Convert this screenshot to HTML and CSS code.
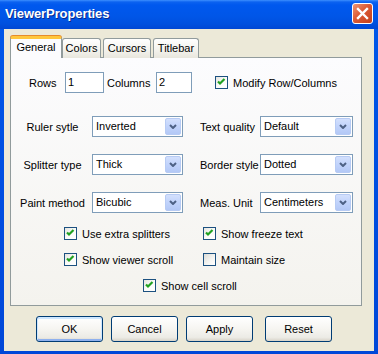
FILE: index.html
```html
<!DOCTYPE html>
<html lang="en">
<head>
    <meta charset="UTF-8">
    <title>ViewerProperties</title>
    <link rel="stylesheet" href="styles.css">
</head>
<body>
    <div class="window">
        <div class="titlebar">
            <span class="title">ViewerProperties</span>
            <div class="close">
                <svg width="19" height="19" viewBox="0 0 19 19"><path d="M5 5 L14 14 M14 5 L5 14" stroke="#fff" stroke-width="2.4" stroke-linecap="square"/></svg>
            </div>
        </div>
        <div class="client">
            <div class="tabs">
                <div class="tab active">General</div>
                <div class="tab colors">Colors</div>
                <div class="tab cursors">Cursors</div>
                <div class="tab titlebar-tab">Titlebar</div>
            </div>
            <div class="panel">
                <div class="row-top">
                    <span class="lbl-rows">Rows</span>
                    <div class="input w-rows">1</div>
                    <span class="lbl-cols">Columns</span>
                    <div class="input w-cols">2</div>
                    <div class="check-item modify">
                        <span class="box checked"><svg width="11" height="11" viewBox="0 0 11 11"><polyline points="2,4.5 4,6.5 8.5,2" fill="none" stroke="#21a121" stroke-width="2.2"/></svg></span>
                        <span>Modify Row/Columns</span>
                    </div>
                </div>

                <div class="form-grid">
                    <span class="lbl-left">Ruler sytle</span>
                    <div class="select"><span class="value">Inverted</span><span class="arrow"><svg width="8" height="5" viewBox="0 0 8 5"><polyline points="1,1 4,4 7,1" fill="none" stroke="#4d6185" stroke-width="2"/></svg></span></div>
                    <span></span>
                    <span class="lbl-right">Text quality</span>
                    <div class="select"><span class="value">Default</span><span class="arrow"><svg width="8" height="5" viewBox="0 0 8 5"><polyline points="1,1 4,4 7,1" fill="none" stroke="#4d6185" stroke-width="2"/></svg></span></div>

                    <span class="lbl-left">Splitter type</span>
                    <div class="select"><span class="value">Thick</span><span class="arrow"><svg width="8" height="5" viewBox="0 0 8 5"><polyline points="1,1 4,4 7,1" fill="none" stroke="#4d6185" stroke-width="2"/></svg></span></div>
                    <span></span>
                    <span class="lbl-right">Border style</span>
                    <div class="select"><span class="value">Dotted</span><span class="arrow"><svg width="8" height="5" viewBox="0 0 8 5"><polyline points="1,1 4,4 7,1" fill="none" stroke="#4d6185" stroke-width="2"/></svg></span></div>

                    <span class="lbl-left">Paint method</span>
                    <div class="select"><span class="value">Bicubic</span><span class="arrow"><svg width="8" height="5" viewBox="0 0 8 5"><polyline points="1,1 4,4 7,1" fill="none" stroke="#4d6185" stroke-width="2"/></svg></span></div>
                    <span></span>
                    <span class="lbl-right">Meas. Unit</span>
                    <div class="select"><span class="value">Centimeters</span><span class="arrow"><svg width="8" height="5" viewBox="0 0 8 5"><polyline points="1,1 4,4 7,1" fill="none" stroke="#4d6185" stroke-width="2"/></svg></span></div>
                </div>

                <div class="checks">
                    <div class="check-item">
                        <span class="box checked"><svg width="11" height="11" viewBox="0 0 11 11"><polyline points="2,4.5 4,6.5 8.5,2" fill="none" stroke="#21a121" stroke-width="2.2"/></svg></span>
                        <span>Use extra splitters</span>
                    </div>
                    <div class="check-item">
                        <span class="box checked"><svg width="11" height="11" viewBox="0 0 11 11"><polyline points="2,4.5 4,6.5 8.5,2" fill="none" stroke="#21a121" stroke-width="2.2"/></svg></span>
                        <span>Show freeze text</span>
                    </div>
                    <div class="check-item">
                        <span class="box checked"><svg width="11" height="11" viewBox="0 0 11 11"><polyline points="2,4.5 4,6.5 8.5,2" fill="none" stroke="#21a121" stroke-width="2.2"/></svg></span>
                        <span>Show viewer scroll</span>
                    </div>
                    <div class="check-item">
                        <span class="box"></span>
                        <span>Maintain size</span>
                    </div>
                    <div class="check-item wide">
                        <span class="box checked"><svg width="11" height="11" viewBox="0 0 11 11"><polyline points="2,4.5 4,6.5 8.5,2" fill="none" stroke="#21a121" stroke-width="2.2"/></svg></span>
                        <span>Show cell scroll</span>
                    </div>
                </div>
            </div>
            <div class="buttons">
                <div class="btn default">OK</div>
                <div class="btn">Cancel</div>
                <div class="btn">Apply</div>
                <div class="btn reset">Reset</div>
            </div>
        </div>
    </div>
</body>
</html>
```

FILE: styles.css
```css
:root{
    --xp-blue: #0054e3;
    --face: #ece9d8;
    --tab-border: #919b9c;
    --field-border: #7f9db9;
    --check-border: #1c5180;
}
*,*::before,*::after{
    box-sizing: border-box;
}
body{
    margin: 0;
    font-family: "Liberation Sans", Arial, sans-serif;
    font-size: 11px;
    color: #000;
}
.window{
    width: 378px;
    height: 354px;
    display: flex;
    flex-direction: column;
    background: linear-gradient(#0058ea, #0047d8);
}
.titlebar{
    height: 29px;
    flex: none;
    display: flex;
    justify-content: space-between;
    align-items: flex-start;
    padding: 3px 5px 0 5px;
    background: linear-gradient(#3d8ffe 0, #0c62f0 2px, #0058ee 5px, #0056e8 16px, #0050de 24px, #0047d4 29px);
}
.title{
    color: #fff;
    font-weight: bold;
    font-size: 13px;
    letter-spacing: -0.1px;
    line-height: 22px;
    text-shadow: 1px 1px #0b2a8c;
}
.close{
    width: 21px;
    height: 21px;
    border: 1px solid #fff;
    border-radius: 3px;
    background: linear-gradient(135deg, #ee9675 0, #db5a35 45%, #c4401b 100%);
    display: flex;
    align-items: center;
    justify-content: center;
}
.client{
    flex: 1;
    margin: 0 4px 3px;
    background: var(--face);
    padding: 7px 0 0 6px;
}
.tabs{
    display: flex;
    align-items: flex-end;
    margin-bottom: -1px;
}
.tab{
    height: 20px;
    border: 1px solid var(--tab-border);
    border-bottom: none;
    border-radius: 3px 3px 0 0;
    background: linear-gradient(#fff, #f3f2ec 60%, #e8e6dd);
    text-align: center;
    line-height: 19px;
}
.tab.active{
    position: relative;
    z-index: 1;
    width: 52px;
    height: 22px;
    border-top: 3px solid #ffc73c;
    box-shadow: 0 -1px 0 #e68b2c;
    background: #fcfcfe;
    line-height: 17px;
}
.tab.colors{
    width: 39px;
}
.tab.cursors{
    width: 48px;
    margin-left: 2px;
}
.tab.titlebar-tab{
    width: 46px;
    margin-left: 2px;
}
.panel{
    width: 352px;
    height: 249px;
    border: 1px solid var(--tab-border);
    background: linear-gradient(#fcfcfe, #f4f3ee);
    padding-top: 14px;
}
.row-top{
    display: flex;
    align-items: center;
    height: 21px;
    padding-left: 18px;
}
.lbl-rows{
    width: 36px;
}
.lbl-cols{
    width: 49px;
    margin-left: 3px;
}
.input{
    height: 21px;
    border: 1px solid var(--field-border);
    background: #fff;
    padding-left: 2px;
    line-height: 19px;
}
.w-rows{
    width: 39px;
}
.w-cols{
    width: 36px;
}
.modify{
    margin-left: 23px;
}
.form-grid{
    display: grid;
    grid-template-columns: 81px 91px 17px 60px 93px;
    grid-auto-rows: 21px;
    row-gap: 17px;
    align-items: center;
    margin-top: 23px;
}
.lbl-left{
    text-align: center;
    padding-left: 2px;
}
.select{
    height: 21px;
    border: 1px solid var(--field-border);
    background: #fff;
    display: flex;
    align-items: stretch;
}
.select .value{
    flex: 1;
    padding-left: 3px;
    line-height: 19px;
}
.select .arrow{
    width: 16px;
    margin: 1px;
    border: 1px solid #b7cbf4;
    border-radius: 2px;
    background: linear-gradient(#d3e0fd, #c1d3fb 50%, #b3c8f6);
    display: flex;
    align-items: center;
    justify-content: center;
}
.checks{
    display: grid;
    grid-template-columns: 139px auto;
    grid-auto-rows: 13px;
    row-gap: 13px;
    margin-top: 14px;
    padding-left: 53px;
}
.check-item{
    display: flex;
    align-items: center;
    gap: 5px;
    white-space: nowrap;
}
.check-item.wide{
    grid-column: 1 / -1;
    padding-left: 79px;
}
.box{
    width: 13px;
    height: 13px;
    flex: none;
    border: 1px solid var(--check-border);
    background: linear-gradient(135deg, #dcdcd7, #f6f6f3 60%, #fff);
    display: flex;
}
.box.checked{
    background: linear-gradient(135deg, #e4e4df, #fbfbf9 50%, #fff);
}
.buttons{
    display: flex;
    gap: 8px;
    margin-top: 10px;
    padding-left: 26px;
}
.btn{
    width: 67px;
    height: 26px;
    border: 1px solid #003c74;
    border-radius: 3px;
    background: linear-gradient(#fff, #f6f5f1 50%, #ecebe5 85%, #d8d3c8);
    text-align: center;
    line-height: 24px;
}
.btn.default{
    box-shadow: inset 0 1px 0 1px #cee7ff, inset 0 -1px 0 1px #8fb1ee;
}
.btn.reset{
    margin-left: 4px;
}
```
